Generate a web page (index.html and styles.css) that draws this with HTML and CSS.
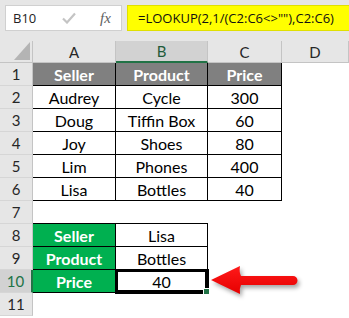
FILE: index.html
```html
<!DOCTYPE html>
<html lang="en">
<head>
    <meta charset="UTF-8">
    <title>LOOKUP last value</title>
    <link rel="stylesheet" href="styles.css">
</head>
<body>
    <div class="formula-bar">
        <div class="name-box">
            <span class="name">B10</span>
            <svg class="check" width="14" height="12" viewBox="0 0 14 12">
                <path d="M1 6.5 L5 10.5 L13 1.5" fill="none" stroke="#c4c4c4" stroke-width="2.2"/>
            </svg>
            <span class="fx">fx</span>
        </div>
        <div class="formula">=LOOKUP(2,1/(C2:C6&lt;&gt;""),C2:C6)</div>
    </div>

    <div class="sheet">
        <div class="corner"><div class="tri"></div></div>
        <div class="col-h">A</div>
        <div class="col-h sel">B</div>
        <div class="col-h">C</div>
        <div class="col-h">D</div>

        <div class="row-h">1</div>
        <div class="c hd b">Seller</div>
        <div class="c hd b">Product</div>
        <div class="c hd b">Price</div>
        <div class="c"></div>

        <div class="row-h">2</div>
        <div class="c b">Audrey</div>
        <div class="c b">Cycle</div>
        <div class="c b">300</div>
        <div class="c"></div>

        <div class="row-h">3</div>
        <div class="c b">Doug</div>
        <div class="c b">Tiffin Box</div>
        <div class="c b">60</div>
        <div class="c"></div>

        <div class="row-h">4</div>
        <div class="c b">Joy</div>
        <div class="c b">Shoes</div>
        <div class="c b">80</div>
        <div class="c"></div>

        <div class="row-h">5</div>
        <div class="c b">Lim</div>
        <div class="c b">Phones</div>
        <div class="c b">400</div>
        <div class="c"></div>

        <div class="row-h">6</div>
        <div class="c b">Lisa</div>
        <div class="c b">Bottles</div>
        <div class="c b">40</div>
        <div class="c"></div>

        <div class="row-h">7</div>
        <div class="c under"></div>
        <div class="c under"></div>
        <div class="c"></div>
        <div class="c"></div>

        <div class="row-h">8</div>
        <div class="c g b">Seller</div>
        <div class="c b">Lisa</div>
        <div class="c"></div>
        <div class="c"></div>

        <div class="row-h">9</div>
        <div class="c g b">Product</div>
        <div class="c b">Bottles</div>
        <div class="c"></div>
        <div class="c"></div>

        <div class="row-h sel">10</div>
        <div class="c g b">Price</div>
        <div class="c b active">40</div>
        <div class="c"></div>
        <div class="c"></div>

        <div class="row-h">11</div>
        <div class="c"></div>
        <div class="c"></div>
        <div class="c"></div>
        <div class="c"></div>

        <svg class="arrow" width="100" height="42" viewBox="0 0 100 42">
            <defs>
                <linearGradient id="red" x1="0" y1="0" x2="0" y2="1">
                    <stop offset="0" stop-color="#ff1a1a"/>
                    <stop offset="1" stop-color="#e60000"/>
                </linearGradient>
            </defs>
            <path d="M6 20 L35 6 Q34 12 36 16 L88 16 A4.5 4.5 0 0 1 88 25 L36 25 Q34 29 35 34 Z" fill="url(#red)"/>
        </svg>
    </div>
</body>
</html>
```

FILE: styles.css
```css
:root {
    --chrome: #e6e6e6;
    --chrome-sel: #d2d2d2;
    --chrome-line: #c4c4c4;
    --excel-green: #217346;
    --dark-head: #808080;
    --green-fill: #00b050;
}

* {
    margin: 0;
    padding: 0;
    box-sizing: border-box;
}

body {
    width: 349px;
    height: 318px;
    overflow: hidden;
    background: #fff;
    font-family: Lato, 'Liberation Sans', sans-serif;
}

/* formula bar */
.formula-bar {
    height: 41px;
    background: var(--chrome);
    display: flex;
    gap: 5px;
    padding: 5px 0 10px 5px;
}

.name-box {
    width: 117px;
    background: #fff;
    border: 1px solid #d0d0d0;
    display: flex;
    align-items: center;
    font-family: 'Open Sans', sans-serif;
}

.name {
    font-size: 13px;
    color: #222;
    margin-left: 7px;
    width: 49px;
}

.check {
    display: block;
}

.fx {
    font-family: 'Liberation Serif', serif;
    font-style: italic;
    font-size: 15px;
    color: #606060;
    margin-left: 24px;
}

.formula {
    flex: 1;
    background: #ffff00;
    border: 1px solid #e0e000;
    border-right: none;
    font-family: 'Open Sans', sans-serif;
    font-size: 13px;
    color: #111;
    display: flex;
    align-items: center;
    padding-left: 10px;
}

/* grid */
.sheet {
    position: relative;
    display: grid;
    grid-template-columns: 33px 83px 92px 74px 67px;
    grid-template-rows: 22px repeat(11, 23px);
}

.corner {
    background: var(--chrome);
    border-right: 1px solid var(--chrome-line);
    border-bottom: 1px solid var(--chrome-line);
    position: relative;
}

.tri {
    position: absolute;
    right: 2px;
    bottom: 2px;
    width: 16px;
    height: 18px;
    background: #b4b4b4;
    clip-path: polygon(100% 0, 100% 100%, 0 100%);
}

.col-h {
    background: var(--chrome);
    border-right: 1px solid var(--chrome-line);
    border-bottom: 1px solid var(--chrome-line);
    display: flex;
    align-items: center;
    justify-content: center;
    font-size: 15px;
    color: #262626;
}

.col-h.sel {
    background: var(--chrome-sel);
    color: #1e5b3a;
    border-bottom: 2px solid var(--excel-green);
}

.row-h {
    background: var(--chrome);
    border-right: 1px solid var(--chrome-line);
    border-bottom: 1px solid #d6d6d6;
    display: flex;
    align-items: center;
    justify-content: center;
    font-size: 15px;
    color: #262626;
}

.row-h.sel {
    background: var(--chrome-sel);
    color: var(--excel-green);
    border-right: 2px solid var(--excel-green);
}

.c {
    display: flex;
    align-items: center;
    justify-content: center;
    font-size: 16px;
    color: #000;
    padding-top: 1px;
}

.b {
    border-right: 1px solid #000;
    border-bottom: 1px solid #000;
}

.under {
    border-bottom: 1px solid #000;
}

.hd {
    background: var(--dark-head);
    color: #fff;
    font-weight: bold;
}

.g {
    background: var(--green-fill);
    color: #fff;
    font-weight: bold;
}

.active {
    position: relative;
    box-shadow: 0 0 0 1px #000, inset 0 0 0 2px #000;
}

.active::after {
    content: '';
    position: absolute;
    right: -3px;
    bottom: -3px;
    width: 5px;
    height: 5px;
    background: var(--excel-green);
    border: 1px solid #fff;
}

.arrow {
    position: absolute;
    left: 205px;
    top: 219px;
    filter: drop-shadow(2px 3px 2px rgba(0, 0, 0, 0.35));
}
```
